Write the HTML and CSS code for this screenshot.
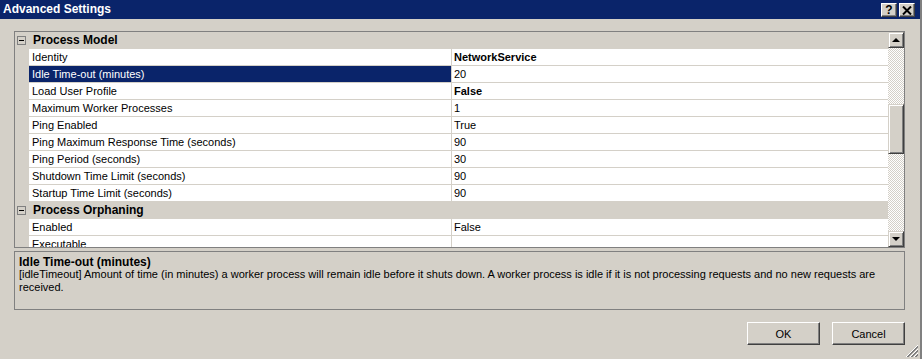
FILE: index.html
```html
<!DOCTYPE html>
<html lang="en">
<head>
  <meta charset="UTF-8">
  <title>Advanced Settings</title>
  <link rel="stylesheet" href="styles.css">
</head>
<body>
  <div class="window">
    <div class="titlebar">
      <span class="title">Advanced Settings</span>
      <div class="tbtn help">?</div>
      <div class="tbtn close">
        <svg width="10" height="9" viewBox="0 0 10 9"><path d="M1 0.5 L9 8.5 M9 0.5 L1 8.5" stroke="#000" stroke-width="2" fill="none"/></svg>
      </div>
    </div>

    <div class="main">
      <div class="grid">
        <div class="rows">
          <div class="cat"><span class="toggle"></span>Process Model</div>
          <div class="prop"><div class="name">Identity</div><div class="value bold">NetworkService</div></div>
          <div class="prop"><div class="name sel">Idle Time-out (minutes)</div><div class="value">20</div></div>
          <div class="prop"><div class="name">Load User Profile</div><div class="value bold">False</div></div>
          <div class="prop"><div class="name">Maximum Worker Processes</div><div class="value">1</div></div>
          <div class="prop"><div class="name">Ping Enabled</div><div class="value">True</div></div>
          <div class="prop"><div class="name">Ping Maximum Response Time (seconds)</div><div class="value">90</div></div>
          <div class="prop"><div class="name">Ping Period (seconds)</div><div class="value">30</div></div>
          <div class="prop"><div class="name">Shutdown Time Limit (seconds)</div><div class="value">90</div></div>
          <div class="prop"><div class="name">Startup Time Limit (seconds)</div><div class="value">90</div></div>
          <div class="cat"><span class="toggle"></span>Process Orphaning</div>
          <div class="prop"><div class="name">Enabled</div><div class="value">False</div></div>
          <div class="prop"><div class="name">Executable</div><div class="value"></div></div>
        </div>
        <div class="scroll">
          <div class="sbtn"><span class="arrow up"></span></div>
          <div class="track">
            <div class="thumb"></div>
          </div>
          <div class="sbtn"><span class="arrow down"></span></div>
        </div>
      </div>

      <div class="desc">
        <div class="desc-title">Idle Time-out (minutes)</div>
        <div class="desc-text">[idleTimeout] Amount of time (in minutes) a worker process will remain idle before it shuts down. A worker process is idle if it is not processing requests and no new requests are received.</div>
      </div>

      <div class="actions">
        <button class="btn">OK</button>
        <button class="btn">Cancel</button>
      </div>
    </div>

    <svg class="grip" width="13" height="13" viewBox="0 0 13 13">
      <path d="M12 1 L1 12 M12 5 L5 12 M12 9 L9 12" stroke="#808080" stroke-width="1" fill="none"/>
      <path d="M12 2 L2 12 M12 6 L6 12 M12 10 L10 12" stroke="#808080" stroke-width="1" fill="none"/>
      <path d="M12 0 L0 12 M12 4 L4 12 M12 8 L8 12" stroke="#fff" stroke-width="1" fill="none"/>
    </svg>
  </div>
</body>
</html>
```

FILE: styles.css
```css
body {
  margin: 0;
  width: 922px;
  height: 359px;
  overflow: hidden;
  background-color: #d4d0c8;
  font-family: "Liberation Sans", Arial, sans-serif;
  font-size: 11px;
  color: #000;
}

.window {
  position: relative;
  display: flex;
  flex-direction: column;
  height: 359px;
  box-sizing: border-box;
  border-right: 2px solid #808080;
}

/* title bar */
.titlebar {
  display: flex;
  align-items: flex-start;
  height: 19px;
  padding: 0 5px 0 3px;
  background-color: #0a246a;
  color: white;
}

.title {
  flex: 1;
  font-size: 12px;
  font-weight: bold;
  line-height: 18px;
}

.tbtn {
  display: flex;
  align-items: center;
  justify-content: center;
  width: 16px;
  height: 14px;
  margin-top: 3px;
  margin-left: 2px;
  box-sizing: border-box;
  background-color: #d4d0c8;
  border: 1px solid;
  border-color: #fff #404040 #404040 #fff;
  box-shadow: inset -1px -1px #808080;
  color: #000;
  font-weight: bold;
  font-size: 12px;
  line-height: 12px;
}

/* content */
.main {
  flex: 1;
  display: flex;
  flex-direction: column;
  padding: 12px 15px 0 14px;
}

.grid {
  display: flex;
  height: 217px;
  box-sizing: border-box;
  border: 1px solid #808080;
  background-color: #d4d0c8;
}

.rows {
  flex: 1;
  overflow: hidden;
}

.cat {
  display: flex;
  align-items: center;
  height: 16px;
  border-bottom: 1px solid #d4d0c8;
  font-weight: bold;
  font-size: 12px;
}

.toggle {
  position: relative;
  width: 9px;
  height: 9px;
  box-sizing: border-box;
  margin: 0 7px 0 2px;
  border: 1px solid #808080;
}

.toggle::after {
  content: "";
  position: absolute;
  left: 1px;
  top: 3px;
  width: 5px;
  height: 1px;
  background-color: #000;
}

.prop {
  display: flex;
  height: 16px;
  padding-left: 14px;
  border-bottom: 1px solid #d4d0c8;
  line-height: 16px;
}

.name {
  width: 423px;
  box-sizing: border-box;
  padding-left: 3px;
  border-right: 1px solid #d4d0c8;
  background-color: white;
  white-space: nowrap;
}

.name.sel {
  background-color: #0a246a;
  color: white;
}

.value {
  flex: 1;
  padding-left: 2px;
  background-color: white;
}

.bold {
  font-weight: bold;
}

/* scrollbar */
.scroll {
  display: flex;
  flex-direction: column;
  width: 16px;
}

.sbtn {
  display: flex;
  align-items: center;
  justify-content: center;
  height: 16px;
  box-sizing: border-box;
  background-color: #d4d0c8;
  border: 1px solid;
  border-color: #d4d0c8 #404040 #404040 #d4d0c8;
  box-shadow: inset 1px 1px #fff, inset -1px -1px #808080;
}

.arrow {
  width: 0;
  height: 0;
  border-left: 4px solid transparent;
  border-right: 4px solid transparent;
}

.arrow.up {
  border-bottom: 4px solid #000;
}

.arrow.down {
  border-top: 4px solid #000;
}

.track {
  flex: 1;
  background: repeating-conic-gradient(#fff 0 25%, #d4d0c8 0 50%) 0 0 / 2px 2px;
}

.thumb {
  height: 50px;
  margin-top: 56px;
  box-sizing: border-box;
  background-color: #d4d0c8;
  border: 1px solid;
  border-color: #d4d0c8 #404040 #404040 #d4d0c8;
  box-shadow: inset 1px 1px #fff, inset -1px -1px #808080;
}

/* description */
.desc {
  height: 59px;
  margin-top: 3px;
  box-sizing: border-box;
  padding: 4px 4px 0 4px;
  border: 1px solid #808080;
}

.desc-title {
  font-weight: bold;
  font-size: 12px;
  line-height: 12px;
}

.desc-text {
  line-height: 13px;
}

/* buttons */
.actions {
  display: flex;
  justify-content: flex-end;
  gap: 12px;
  margin-top: 12px;
}

.btn {
  width: 73px;
  height: 23px;
  padding: 0;
  box-sizing: border-box;
  background-color: #d4d0c8;
  border: 1px solid;
  border-color: #fff #404040 #404040 #fff;
  box-shadow: inset -1px -1px #808080;
  font-family: "Liberation Sans", Arial, sans-serif;
  font-size: 11px;
  color: #000;
}

.grip {
  position: absolute;
  right: 1px;
  bottom: 1px;
}
```
